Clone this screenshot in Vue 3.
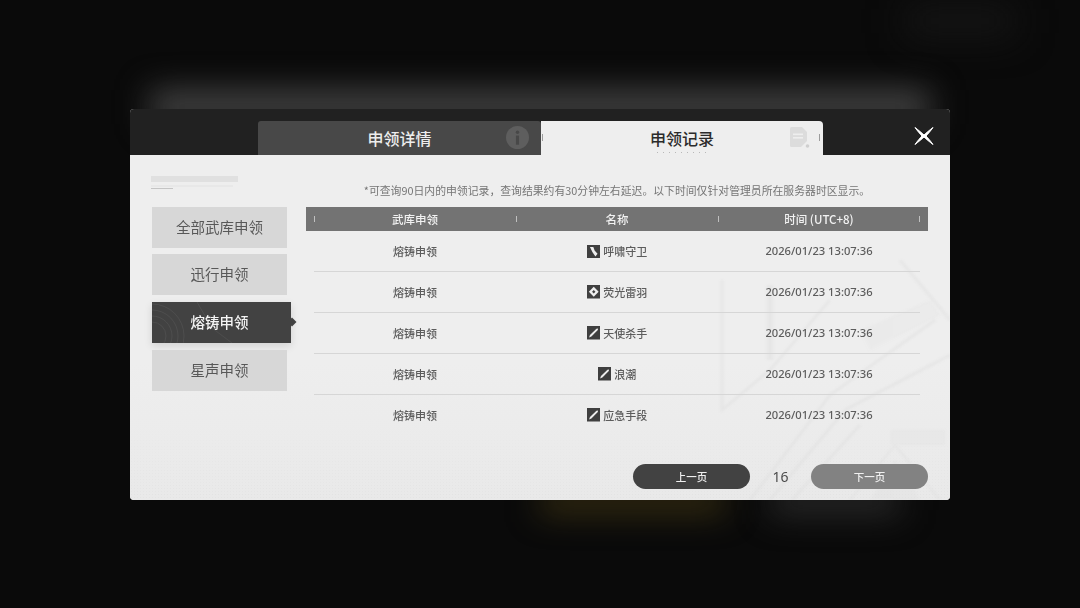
<script setup>
const categories = [
  { name: '全部武库申领' },
  { name: '迅行申领' },
  { name: '熔铸申领', active: true },
  { name: '星声申领' },
]
const swordPath = 'M2.5 13.5 L3.5 10.8 L11.2 3.2 L13 3 L12.8 4.8 L5.2 12.5 Z'
const rows = [
  { type: '熔铸申领', name: '呼啸守卫', icon: 'gauntlet', time: '2026/01/23 13:07:36' },
  { type: '熔铸申领', name: '荧光雷羽', icon: 'pistol', time: '2026/01/23 13:07:36' },
  { type: '熔铸申领', name: '天使杀手', icon: 'sword', time: '2026/01/23 13:07:36' },
  { type: '熔铸申领', name: '浪潮', icon: 'sword', time: '2026/01/23 13:07:36' },
  { type: '熔铸申领', name: '应急手段', icon: 'sword', time: '2026/01/23 13:07:36' },
]
</script>

<template>
  <div class="stage">
    <div class="glow glow-top"></div>
    <div class="glow glow-corner"></div>
    <div class="glow glow-gold"></div>
    <div class="glow glow-white"></div>

    <section class="modal">
      <header class="head">
        <div class="tab tab-off">
          <span class="tab-label">申领详情</span>
          <svg class="tab-info" viewBox="0 0 24 24">
            <circle cx="12" cy="12" r="12" fill="#5e5e5e" />
            <circle cx="12" cy="6.5" r="1.8" fill="#484848" />
            <rect x="10.4" y="10" width="3.2" height="9.5" fill="#484848" />
          </svg>
        </div>
        <div class="tab tab-on">
          <i class="tick tick-left"></i>
          <span class="tab-label">申领记录</span>
          <span class="tab-dots"></span>
          <svg class="tab-doc" viewBox="0 0 20 22">
            <path d="M0 1.5 Q0 0 1.5 0 H12 L17 5 V14 L11 20 H1.5 Q0 20 0 18.5 Z" fill="#dcdcdc" />
            <rect x="3" y="6.5" width="10" height="1.6" fill="#eeeeee" />
            <rect x="3" y="10" width="10" height="1.6" fill="#eeeeee" />
            <circle cx="17.5" cy="19" r="1.8" fill="#cfcfcf" />
          </svg>
          <i class="tick tick-right"></i>
        </div>
        <svg class="close" viewBox="0 0 20 18">
          <path d="M1 0.5 C5 3.5 7.5 5.8 10 8 C12.5 5.8 15 3.5 19 0.5 C16.5 4 14.2 6.6 12 9 C14.2 11.4 16.5 14 19 17.5 C15 14.5 12.5 12.2 10 10 C7.5 12.2 5 14.5 1 17.5 C3.5 14 5.8 11.4 8 9 C5.8 6.6 3.5 4 1 0.5 Z" fill="#ffffff" stroke="#ffffff" stroke-width="1" stroke-linejoin="round" />
        </svg>
      </header>

      <div class="body">
        <svg class="art" viewBox="0 0 250 240">
          <g fill="none" stroke="#dedede" stroke-width="3">
            <path d="M22 20 V150 L70 110 L130 40" />
            <path d="M70 25 V100" stroke-width="7" />
            <path d="M50 240 L130 135 L235 60" />
            <path d="M70 240 L145 150 L250 95" />
            <path d="M92 240 L160 165" />
            <path d="M200 0 L250 60" />
            <path d="M150 240 L195 185 L240 240" stroke-width="2" />
          </g>
          <path d="M170 240 L195 200 L220 240 Z" fill="#e2e2e2" />
          <path d="M190 170 H245 V185 H190 Z" fill="#e4e4e4" />
          <path d="M160 70 L230 40 L240 55 L170 90 Z" fill="#e6e6e6" />
        </svg>
        <div class="texture"></div>

        <aside class="side">
          <div class="logo">
            <span class="logo-bar"></span>
            <span class="logo-sub"></span>
            <span class="logo-mini"></span>
          </div>
          <nav class="cats">
            <button v-for="c in categories" :key="c.name" class="cat" :class="{ active: c.active }">
              <svg v-if="c.active" class="cat-rings" viewBox="0 0 135 41">
                <g fill="none" stroke="#565656" stroke-width="0.6">
                  <circle cx="0" cy="34" r="14" /><circle cx="0" cy="34" r="20" />
                  <circle cx="0" cy="34" r="26" /><circle cx="0" cy="34" r="32" />
                  <path d="M45 0 L60 26 L80 41" />
                </g>
              </svg>
              <span class="cat-name">{{ c.name }}</span>
            </button>
          </nav>
        </aside>

        <main class="main">
          <p class="note">*可查询90日内的申领记录，查询结果约有30分钟左右延迟。以下时间仅针对管理员所在服务器时区显示。</p>
          <div class="thead">
            <span class="th">武库申领</span>
            <span class="th">名称</span>
            <span class="th th-last">时间 (UTC+8)</span>
          </div>
          <div class="rows">
            <div v-for="(r, i) in rows" :key="i" class="row">
              <span class="cell">{{ r.type }}</span>
              <span class="cell cell-name">
                <svg class="wicon" viewBox="0 0 16 16">
                  <rect width="16" height="16" fill="#3f3f3f" />
                  <path v-if="r.icon === 'sword'" :d="swordPath" fill="#eeeeee" />
                  <path v-else-if="r.icon === 'gauntlet'" d="M3.5 2.5 H7.5 L9 6.5 L12.5 10.5 L10 13.5 L6.5 8.5 Z" fill="#eeeeee" />
                  <g v-else>
                    <path d="M8 2.2 L13.8 8 L8 13.8 L2.2 8 Z" fill="#eeeeee" />
                    <path d="M8 6 L10 8 L8 10 L6 8 Z" fill="#3f3f3f" />
                  </g>
                </svg>
                {{ r.name }}
              </span>
              <span class="cell cell-time">{{ r.time }}</span>
            </div>
          </div>
          <div class="pager">
            <button class="page-btn page-prev">上一页</button>
            <span class="page-num">16</span>
            <button class="page-btn page-next">下一页</button>
          </div>
        </main>
      </div>
    </section>
  </div>
</template>

<style scoped>
.stage {
  position: relative;
  width: 1080px;
  height: 608px;
  overflow: hidden;
  background: #0a0a0a;
  display: flex;
  align-items: center;
  justify-content: center;
  font-family: "Noto Sans CJK SC", "Noto Sans", sans-serif;
}
.glow { position: absolute; filter: blur(16px); }
.glow-top { left: 150px; top: 90px; width: 780px; height: 34px; background: #444444; }
.glow-corner { left: 905px; top: 6px; width: 110px; height: 30px; background: #161616; filter: blur(18px); }
.glow-gold { left: 540px; top: 492px; width: 185px; height: 20px; background: #3f3412; }
.glow-white { left: 770px; top: 490px; width: 130px; height: 24px; background: #2c2c2c; }

.modal {
  position: relative;
  width: 820px;
  height: 391px;
  border-radius: 4px;
  overflow: hidden;
  display: flex;
  flex-direction: column;
  background: #eeeeee;
  filter: blur(0.35px);
}

.head {
  height: 46px;
  flex: none;
  background: #212121;
  display: flex;
  align-items: flex-end;
  padding-left: 128px;
  position: relative;
}
.tab {
  position: relative;
  height: 34px;
  display: flex;
  align-items: center;
  justify-content: center;
  border-radius: 3px 3px 0 0;
}
.tab-off { width: 283px; background: #484848; color: #ededed; }
.tab-on { width: 282px; background: #eeeeee; color: #2b2b2b; border-radius: 0 4px 0 0; }
.tab-label { font-size: 16px; font-weight: 500; line-height: 34px; }
.tab-info { position: absolute; left: 248px; top: 5px; width: 23px; height: 23px; }
.tab-doc { position: absolute; left: 249px; top: 6px; width: 20px; height: 22px; }
.tick { position: absolute; top: 13px; width: 1px; height: 7px; background: #9c9c9c; }
.tick-left { left: 1px; }
.tick-right { right: 3px; }
.tab-dots {
  position: absolute;
  left: 116px;
  top: 31px;
  width: 50px;
  height: 1px;
  background: repeating-linear-gradient(90deg, #b8b8b8 0 1px, transparent 1px 6px);
}
.close { position: absolute; left: 784px; top: 18px; width: 20px; height: 18px; }

.body {
  position: relative;
  flex: 1;
  display: flex;
  padding: 21px 22px 11px 22px;
  gap: 19px;
  background: linear-gradient(180deg, #eeeeee 60%, #e9e9e9 100%);
}
.art {
  position: absolute;
  right: 0;
  bottom: 0;
  width: 250px;
  height: 240px;
  opacity: 0.45;
  filter: blur(1px);
}
.texture {
  position: absolute;
  left: 0;
  right: 0;
  bottom: 0;
  height: 70px;
  background-image: radial-gradient(#e0e0e0 0.6px, transparent 0.7px);
  background-size: 3px 3px;
  opacity: 0.6;
  -webkit-mask-image: linear-gradient(180deg, transparent, #000);
  mask-image: linear-gradient(180deg, transparent, #000);
}

.side { position: relative; width: 135px; flex: none; }
.logo { height: 31px; display: flex; flex-direction: column; align-items: flex-start; filter: blur(0.4px); }
.logo-bar { width: 87px; height: 6px; background: #e0e0e0; margin-left: -1px; }
.logo-sub { width: 82px; height: 2px; margin: 3px 0 0 -1px; background: #e8e8e8; }
.logo-mini { width: 22px; height: 1px; margin: 1px 0 0 -1px; background: #c4c4c4; }
.cats { display: flex; flex-direction: column; gap: 6.7px; }
.cat {
  position: relative;
  height: 41px;
  padding: 0;
  border: 0;
  background: #d7d7d7;
  color: #585858;
  font-family: inherit;
  font-size: 14.5px;
  display: flex;
  align-items: center;
  justify-content: center;
}
.cat-name { position: relative; top: -1px; }
.cat.active {
  width: 139px;
  background: #424242;
  color: #f4f4f4;
  font-weight: 500;
  box-shadow: 0 3px 8px rgba(0, 0, 0, 0.12);
  padding-right: 4px;
}
.cat.active::after {
  content: "";
  position: absolute;
  right: -5px;
  top: 16px;
  width: 8px;
  height: 8px;
  background: #424242;
  transform: rotate(45deg) scale(0.8);
}
.cat-rings { position: absolute; left: 0; top: 0; width: 135px; height: 41px; }

.main { position: relative; flex: 1; min-width: 0; }
.note {
  margin: 0;
  height: 31px;
  padding-top: 6px;
  box-sizing: border-box;
  text-align: center;
  white-space: nowrap;
  font-size: 10.85px;
  line-height: 16px;
  color: #757575;
}
.thead {
  height: 24px;
  padding: 0 8px;
  display: grid;
  grid-template-columns: repeat(3, 202px);
  background: #737373;
  color: #f2f2f2;
}
.th {
  position: relative;
  text-align: center;
  font-size: 11.5px;
  line-height: 24px;
  font-weight: 500;
}
.th::before {
  content: "";
  position: absolute;
  left: 0;
  top: 9px;
  width: 1px;
  height: 6px;
  background: #c0c0c0;
}
.th-last::after {
  content: "";
  position: absolute;
  right: 0;
  top: 9px;
  width: 1px;
  height: 6px;
  background: #c0c0c0;
}
.rows { padding: 1px 8px 0; }
.row {
  display: grid;
  grid-template-columns: repeat(3, 202px);
  align-items: center;
  height: 40.8px;
  box-sizing: border-box;
  border-bottom: 1px solid #d6d6d6;
}
.row:last-child { border-bottom: 0; }
.cell {
  text-align: center;
  font-size: 11px;
  line-height: 16px;
  font-weight: 500;
  color: #5c5c5c;
}
.cell-name { display: flex; align-items: center; justify-content: center; gap: 3px; }
.cell-time { font-family: "Noto Sans", sans-serif; font-size: 11.2px; }
.wicon { width: 13.5px; height: 13.5px; flex: none; }

.pager {
  position: absolute;
  right: 0;
  bottom: 0;
  display: flex;
  align-items: center;
}
.page-btn {
  width: 117px;
  height: 25px;
  padding: 0;
  border: 0;
  border-radius: 13px;
  font-family: inherit;
  font-size: 10.5px;
  font-weight: 500;
  color: #f0f0f0;
}
.page-prev { background: #424242; }
.page-next { background: #828282; }
.page-num {
  width: 61px;
  text-align: center;
  font-family: "Noto Sans", sans-serif;
  font-size: 14px;
  color: #4a4a4a;
}
</style>
